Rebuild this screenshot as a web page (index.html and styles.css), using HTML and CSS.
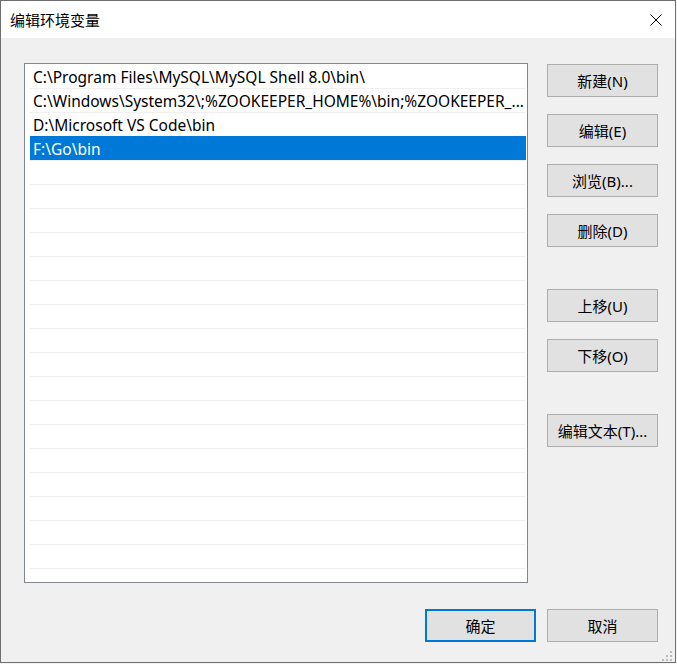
FILE: index.html
```html
<!DOCTYPE html>
<html lang="zh-CN">
<head>
<meta charset="utf-8">
<title>编辑环境变量</title>
<link rel="stylesheet" href="styles.css">
</head>
<body>
<div class="window">
  <div class="titlebar">
    <span class="title">编辑环境变量</span>
    <div class="close">
      <svg width="12" height="12" viewBox="0 0 12 12"><path d="M0.5 0.5 L11.5 11.5 M11.5 0.5 L0.5 11.5" stroke="#000" stroke-width="1" fill="none"/></svg>
    </div>
  </div>
  <div class="content">
    <div class="main">
      <div class="list">
        <div class="row">C:\Program Files\MySQL\MySQL Shell 8.0\bin\</div>
        <div class="row">C:\Windows\System32\;%ZOOKEEPER_HOME%\bin;%ZOOKEEPER_...</div>
        <div class="row">D:\Microsoft VS Code\bin</div>
        <div class="row selected">F:\Go\bin</div>
        <div class="row"></div><div class="row"></div><div class="row"></div><div class="row"></div>
        <div class="row"></div><div class="row"></div><div class="row"></div><div class="row"></div>
        <div class="row"></div><div class="row"></div><div class="row"></div><div class="row"></div>
        <div class="row"></div><div class="row"></div><div class="row"></div><div class="row"></div>
        <div class="row"></div><div class="row"></div>
      </div>
      <div class="actions">
        <div class="group">
          <div class="btn">新建(N)</div>
          <div class="btn">编辑(E)</div>
          <div class="btn">浏览(B)...</div>
          <div class="btn">删除(D)</div>
        </div>
        <div class="group">
          <div class="btn">上移(U)</div>
          <div class="btn">下移(O)</div>
        </div>
        <div class="group">
          <div class="btn">编辑文本(T)...</div>
        </div>
      </div>
    </div>
    <div class="footer">
      <div class="btn default">确定</div>
      <div class="btn">取消</div>
    </div>
  </div>
  <svg class="grip" width="12" height="10" viewBox="0 0 12 10">
    <rect x="8" y="0" width="2" height="2" fill="#bdbdbd"/>
    <rect x="4" y="4" width="2" height="2" fill="#bdbdbd"/>
    <rect x="8" y="4" width="2" height="2" fill="#bdbdbd"/>
    <rect x="0" y="8" width="2" height="2" fill="#bdbdbd"/>
    <rect x="4" y="8" width="2" height="2" fill="#bdbdbd"/>
    <rect x="8" y="8" width="2" height="2" fill="#bdbdbd"/>
  </svg>
</div>
</body>
</html>
```
FILE: styles.css
```css
html, body {
  margin: 0;
  padding: 0;
}
body {
  background: #f4f4f4;
  font-family: "Noto Sans", "Noto Sans CJK SC", sans-serif;
  font-size: 15px;
  color: #000;
}
.window {
  position: relative;
  box-sizing: border-box;
  width: 676px;
  height: 663px;
  border: 1px solid #6f6f6f;
  background: #f0f0f0;
  display: flex;
  flex-direction: column;
}
.titlebar {
  height: 37px;
  background: #fff;
  display: flex;
  align-items: center;
  justify-content: space-between;
}
.title {
  padding-left: 9px;
  font-size: 15px;
  color: #000;
}
.close {
  width: 39px;
  height: 37px;
  display: flex;
  align-items: center;
  justify-content: center;
}
.close svg {
  display: block;
}
.content {
  padding: 25px 17px 0 23px;
  display: flex;
  flex-direction: column;
}
.main {
  display: flex;
  gap: 19px;
}
.list {
  box-sizing: border-box;
  width: 504px;
  height: 520px;
  border: 1px solid #828790;
  background: #fff;
  padding: 0 1px 0 5px;
  overflow: hidden;
}
.row {
  box-sizing: border-box;
  height: 24px;
  border-top: 1px solid #f0f0f0;
  padding: 0 3px;
  display: flex;
  align-items: center;
  white-space: nowrap;
  overflow: hidden;
  font-size: 15.5px;
}
.row:first-child {
  border-top-color: #fff;
}
.row.selected {
  background: #0078d7;
  border-top-color: #0078d7;
  color: #fff;
}
.actions {
  display: flex;
  flex-direction: column;
  gap: 42px;
  padding-top: 1px;
}
.group {
  display: flex;
  flex-direction: column;
  gap: 17px;
}
.btn {
  box-sizing: border-box;
  width: 111px;
  height: 33px;
  border: 1px solid #adadad;
  background: #e1e1e1;
  display: flex;
  align-items: center;
  justify-content: center;
  white-space: nowrap;
}
.btn.default {
  border: 2px solid #0078d7;
}
.footer {
  margin-top: 26px;
  display: flex;
  justify-content: flex-end;
  gap: 11px;
}
.grip {
  position: absolute;
  right: 1px;
  bottom: 1px;
}
```
